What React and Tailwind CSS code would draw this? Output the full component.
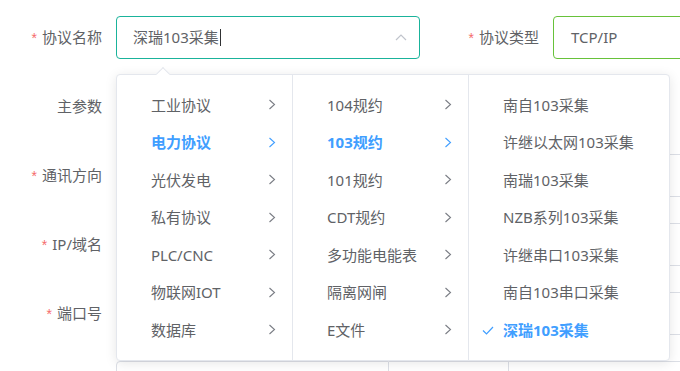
import React from "react";

const menu1 = ["工业协议", "电力协议", "光伏发电", "私有协议", "PLC/CNC", "物联网IOT", "数据库"];
const menu2 = ["104规约", "103规约", "101规约", "CDT规约", "多功能电能表", "隔离网闸", "E文件"];
const menu3 = ["南自103采集", "许继以太网103采集", "南瑞103采集", "NZB系列103采集", "许继串口103采集", "南自103串口采集", "深瑞103采集"];

function Chevron({ active }) {
  return (
    <svg width="8" height="11" viewBox="0 0 8 11" fill="none">
      <path d="M1.5 1 L6.5 5.5 L1.5 10" stroke={active ? "#409eff" : "#7a7d84"} strokeWidth="1.1" />
    </svg>
  );
}

function Label({ text, req }) {
  return (
    <div className="w-[116px] shrink-0 pr-[14px] text-right text-[#606266]">
      {req && (
        <span className="text-[#f56c6c] mr-[5px] text-[14px] font-['Liberation_Sans',sans-serif]">*</span>
      )}
      {text}
    </div>
  );
}

function Column({ items, selected, last, width }) {
  return (
    <div className={`${width} h-full py-[11px] ${last ? "" : "border-r border-[#e4e7ed]"}`}>
      {items.map((t, i) => {
        const on = i === selected;
        return (
          <div key={t} className="relative h-[37.5px] flex items-center pl-[34px] pr-[16px]">
            {last && on && (
              <svg className="absolute left-[13px] top-[15px]" width="12" height="9" viewBox="0 0 12 9" fill="none">
                <path d="M1 4.5 L4.5 8 L11 1" stroke="#409eff" strokeWidth="1.2" />
              </svg>
            )}
            <span className={`flex-1 ${on ? "text-[#409eff] font-bold" : "text-[#606266]"}`}>{t}</span>
            {!last && <Chevron active={on} />}
          </div>
        );
      })}
    </div>
  );
}

export default function App() {
  const rows = [
    { text: "主参数", req: false, right: false },
    { text: "通讯方向", req: true, right: true },
    { text: "IP/域名", req: true, right: true },
    { text: "端口号", req: true, right: true },
  ];

  return (
    <div
      className="relative w-[680px] h-[371px] overflow-hidden bg-white text-[15px]"
      style={{ fontFamily: '"Noto Sans", "Noto Sans CJK SC", sans-serif' }}
    >
      <div className="pt-[16px] flex flex-col gap-[26px]">
        {/* 协议名称 / 协议类型 */}
        <div className="flex items-center h-[43px]">
          <Label text="协议名称" req />
          <div className="w-[304px] h-full shrink-0 border border-[#1ab39b] rounded-[4px] flex items-center pl-[16px] pr-[12px]">
            <span className="text-[#606266]">深瑞103采集</span>
            <span className="w-px h-[17px] bg-[#303133] ml-px" />
            <div className="flex-1" />
            <svg width="12" height="7" viewBox="0 0 12 7" fill="none">
              <path d="M1 6 L6 1 L11 6" stroke="#c0c4cc" strokeWidth="1.2" />
            </svg>
          </div>
          <div className="w-[17px] shrink-0" />
          <Label text="协议类型" req />
          <div className="w-[200px] h-full shrink-0 border border-[#67c23a] rounded-[4px] flex items-center pl-[17px] text-[#606266]">
            TCP/IP
          </div>
        </div>

        {rows.map((r) => (
          <div key={r.text} className="flex items-center h-[43px]">
            <Label text={r.text} req={r.req} />
            <div className="w-[304px] h-full shrink-0 border border-[#dcdfe6] rounded-[4px]" />
            <div className="w-[133px] shrink-0" />
            {r.right && <div className="w-[200px] h-full shrink-0 border border-[#dcdfe6] rounded-[4px]" />}
          </div>
        ))}

        <div className="flex h-[43px] pl-[116px]">
          <div className="w-[273px] shrink-0 h-full border border-[#dcdfe6] rounded-l-[4px]" />
          <div className="w-[120px] shrink-0 h-full border-y border-r border-[#dcdfe6]" />
          <div className="w-[200px] shrink-0 h-full border-y border-r border-[#dcdfe6]" />
        </div>
      </div>

      {/* cascader dropdown */}
      <div className="absolute left-[116px] top-[74px] w-[554px] h-[287px] bg-white border border-[#e4e7ed] rounded-[4px] shadow-[0_2px_12px_0_rgba(0,0,0,0.1)]">
        <div className="absolute -top-[6px] left-[41px] w-[10px] h-[10px] bg-white border-l border-t border-[#e4e7ed] rotate-45" />
        <div className="relative flex h-full">
          <Column items={menu1} selected={1} width="w-[176px]" />
          <Column items={menu2} selected={1} width="w-[176px]" />
          <Column items={menu3} selected={6} last width="flex-1" />
        </div>
      </div>
    </div>
  );
}
